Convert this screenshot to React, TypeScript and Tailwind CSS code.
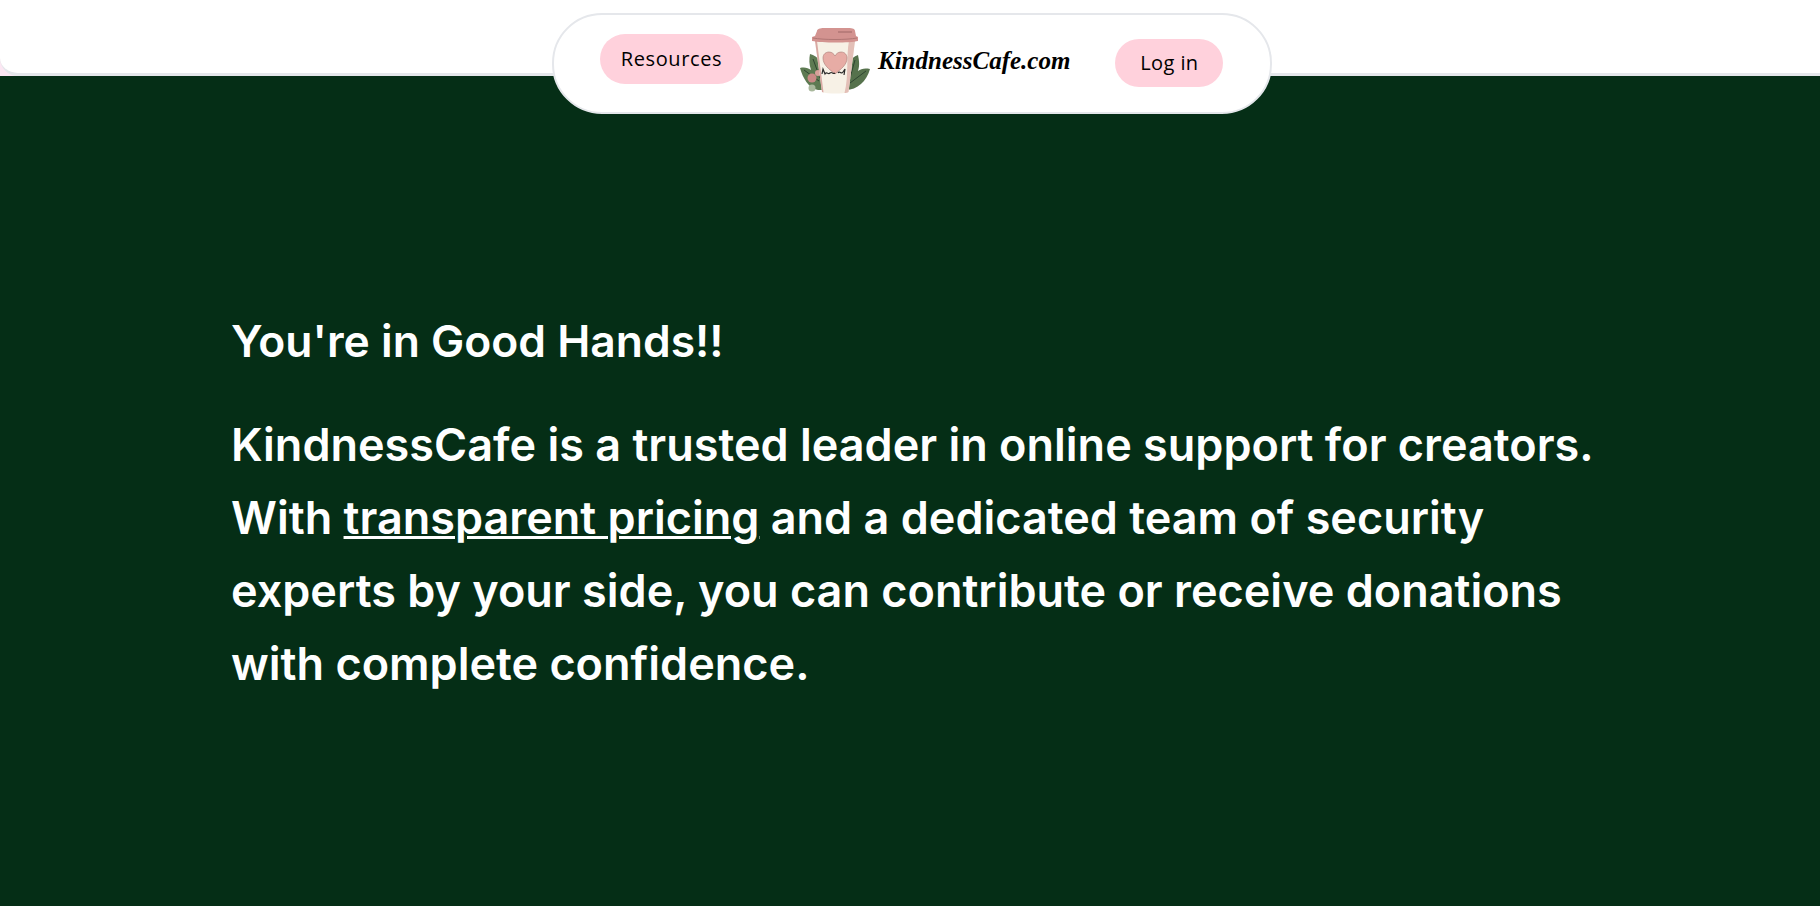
const CupLogo = () => {
  return (
    <svg width="72" height="66" viewBox="0 0 72 66" className="shrink-0">
      {/* leaves */}
      <path d="M18 62C8 60 3 50 0 40C5 39 8 40 11 42C9 36 9 31 10 26C18 28 24 36 26 44L26 62Z" fill="#5d7a52" />
      <path d="M46 62C57 62 67 53 70 41C64 40 61 41 58 43C60 37 59 32 58 27C50 30 46 38 44 46Z" fill="#56724c" />
      <path d="M13 31L20 50M4 42L19 53M55 32L50 50M66 43L50 55" stroke="#2f4530" strokeWidth="1" fill="none" />
      {/* flowers */}
      <circle cx="12" cy="50" r="4.5" fill="#c98a86" />
      <circle cx="18" cy="45" r="3" fill="#d7a09a" />
      <circle cx="12" cy="60" r="3.5" fill="#a9b89c" />
      {/* body */}
      <path d="M15 13L55 13L48.5 64C43 66 28 66 22 64Z" fill="#f7f1e6" />
      <path d="M49 13L55 13L48.5 64C47.5 64.7 46 65 44.5 65C49 48 46 28 49 13Z" fill="#e3bfb7" />
      <path d="M15 13L17 13L23.5 64.5L22 64Z" fill="#d9a8a3" />
      {/* lid */}
      <path d="M17 3C17 1 20 0 24 0L48 0C53 0 55 1 55 3L56 8L58 9L58 13C50 15 22 15 12 13L12 9L15 8Z" fill="#d39390" />
      <path d="M13 10C24 12 46 12 57 10" stroke="#b07674" strokeWidth="1" fill="none" />
      <path d="M38 4L52 4" stroke="#b07674" strokeWidth="1.5" fill="none" />
      {/* heart */}
      <path d="M35 46C29 41 23 37 23 30C23 26 26 24 29 24C32 24 34 26 35 28C36 26 38 24 41 24C45 24 47 27 47 30C47 37 41 41 35 46Z" fill="#e7aca5" stroke="#a87a76" strokeWidth="0.6" />
      <path d="M22 46L23 41L25 46C27 43 28 47 30 45C32 43 33 47 35 45M38 45C40 42 41 47 43 44L45 41L44 47" stroke="#2b2b2b" strokeWidth="1.2" fill="none" />
    </svg>
  )
}

export default function App() {
  return (
    <div className="min-h-[906px] bg-[#052e16] font-['Inter',sans-serif] overflow-hidden">
      {/* top bar */}
      <div className="bg-[#fce7f3]">
        <header className="h-[76px] bg-white border-b-[3px] border-[#e5e7eb] rounded-bl-[18px] flex justify-center">
          <nav className="mt-[13px] ml-[4px] w-[720px] h-[101px] shrink-0 bg-white border-2 border-[#e5e7eb] rounded-[50px] flex items-center pl-[46px]">
            <button className="h-[50px] w-[143px] mb-[9px] rounded-full bg-[#ffd1dc] text-black text-[20px] tracking-[0.6px] font-['Open_Sans',sans-serif]">
              Resources
            </button>
            <div className="flex items-center ml-[57px] mt-[-6px]">
              <CupLogo />
              <span className="ml-[6px] text-[25px] leading-none font-bold italic text-black font-['Liberation_Serif',serif]">
                KindnessCafe.com
              </span>
            </div>
            <button className="h-[48px] w-[108px] ml-[45px] mb-[2px] rounded-full bg-[#ffd1dc] text-black text-[20px] tracking-[0.4px] font-['Open_Sans',sans-serif]">
              Log in
            </button>
          </nav>
        </header>
      </div>

      {/* main copy */}
      <main className="pl-[231px] pr-[200px] pt-[229px] text-white">
        <h2 className="text-[44.4px] leading-[73px] font-semibold">You're in Good Hands!!</h2>
        <p className="mt-[30px] text-[45px] leading-[73px] font-[630] w-[1450px]">
          KindnessCafe is a trusted leader in online support for creators.
          <br />
          With <a className="underline decoration-[3px]">transparent pricing</a> and a dedicated team of security
          <br />
          experts by your side, you can contribute or receive donations
          <br />
          with complete confidence.
        </p>
      </main>
    </div>
  )
}
